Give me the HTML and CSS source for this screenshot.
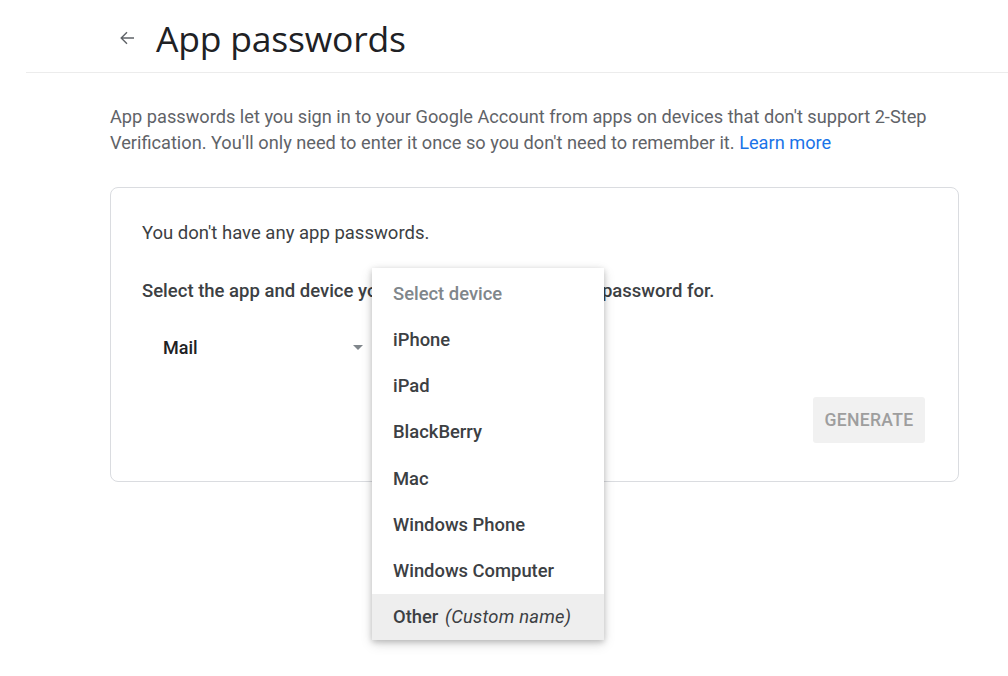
FILE: index.html
```html
<!DOCTYPE html>
<html lang="en">
<head>
<meta charset="utf-8">
<title>App passwords</title>
<link rel="stylesheet" href="styles.css">
</head>
<body>
<header class="topbar">
  <div class="topbar-inner">
    <span class="back">
      <svg width="16" height="16" viewBox="0 0 16 16" aria-hidden="true"><path d="M15 8H2.2M8 2.2L2.2 8 8 13.8" fill="none" stroke="#5f6368" stroke-width="1.4"/></svg>
    </span>
    <h1 class="title">App passwords</h1>
  </div>
</header>
<main class="content">
  <p class="intro">App passwords let you sign in to your Google Account from apps on devices that don't support <span class="nowrap">2-Step</span> Verification. You'll only need to enter it once so you don't need to remember it. <a class="link" href="#">Learn more</a></p>
  <section class="card">
    <p class="none">You don't have any app passwords.</p>
    <p class="select-label">Select the app and device you want to generate the app password for.</p>
    <div class="selects">
      <div class="select">
        <span class="select-value">Mail</span>
        <span class="caret"></span>
      </div>
      <div class="select device"></div>
    </div>
    <div class="actions">
      <button class="generate" disabled>GENERATE</button>
    </div>
    <ul class="menu">
      <li class="menu-item placeholder">Select device</li>
      <li class="menu-item">iPhone</li>
      <li class="menu-item">iPad</li>
      <li class="menu-item">BlackBerry</li>
      <li class="menu-item">Mac</li>
      <li class="menu-item">Windows Phone</li>
      <li class="menu-item">Windows Computer</li>
      <li class="menu-item active">Other <em>(Custom name)</em></li>
    </ul>
  </section>
</main>
</body>
</html>
```

FILE: styles.css
```css
* { box-sizing: border-box; }
html, body { margin: 0; padding: 0; background: #fff; }
body {
  font-family: Roboto, "Liberation Sans", Arial, sans-serif;
  color: #3c4043;
  width: 1008px;
  height: 676px;
  overflow: hidden;
}
.topbar {
  margin-left: 26px;
  height: 73px;
  border-bottom: 1px solid #ececec;
}
.topbar-inner {
  display: flex;
  align-items: center;
  padding-left: 93px;
  height: 72px;
  padding-bottom: 0;
  padding-top: 4px;
}
.back {
  display: flex;
  width: 16px;
  height: 16px;
  margin-right: 21px;
}
.title {
  margin: 0;
  font-family: "Open Sans", Roboto, sans-serif;
  font-weight: 400;
  font-size: 35.5px;
  color: #202124;
  letter-spacing: -0.2px;
}
.content {
  padding-left: 110px;
  width: 959px;
}
.intro {
  margin: 31px 0 0;
  font-size: 18.2px;
  line-height: 26px;
  color: #5f6368;
}
.nowrap { white-space: nowrap; }
.link { color: #1a73e8; text-decoration: none; }
.card {
  position: relative;
  margin-top: 31px;
  height: 295px;
  border: 1px solid #dadce0;
  border-radius: 8px;
  padding: 33px 33px 0 31px;
}
.none {
  margin: 0;
  font-size: 18.5px;
  line-height: 24px;
  color: #3c4043;
}
.select-label {
  margin: 34px 0 0;
  font-size: 18.5px;
  line-height: 24px;
  font-weight: 500;
  color: #3c4043;
}
.selects {
  display: flex;
  gap: 20px;
  margin-top: 32px;
}
.select {
  display: flex;
  align-items: center;
  justify-content: space-between;
  width: 230px;
  height: 24px;
  padding: 0 9px 0 21px;
}
.select.device { width: 200px; }
.select-value {
  font-size: 18px;
  font-weight: 500;
  color: #202124;
}
.caret {
  width: 0;
  height: 0;
  border-left: 5.5px solid transparent;
  border-right: 5.5px solid transparent;
  border-top: 5px solid #80868b;
}
.actions {
  display: flex;
  justify-content: flex-end;
  margin-top: 38px;
}
.generate {
  width: 112px;
  height: 46px;
  border: none;
  border-radius: 3px;
  background: #f1f1f1;
  color: #9e9e9e;
  font-family: Roboto, sans-serif;
  font-size: 17.6px;
  font-weight: 500;
  letter-spacing: 0.3px;
  padding: 0;
}
.menu {
  position: absolute;
  left: 261px;
  top: 80px;
  width: 232px;
  margin: 0;
  padding: 2px 0 0;
  list-style: none;
  background: #fff;
  box-shadow: 0 2px 6px rgba(0,0,0,0.22), 0 4px 12px rgba(0,0,0,0.12);
}
.menu-item {
  height: 46.25px;
  display: flex;
  align-items: center;
  padding-left: 21px;
  font-size: 18.4px;
  font-weight: 500;
  color: #3c4043;
  white-space: pre;
}
.menu-item.placeholder { color: #80868b; }
.menu-item.active { background: #eeeeee; }
.menu-item em { font-weight: 400; margin-left: 2px; letter-spacing: 0.2px; }
```
